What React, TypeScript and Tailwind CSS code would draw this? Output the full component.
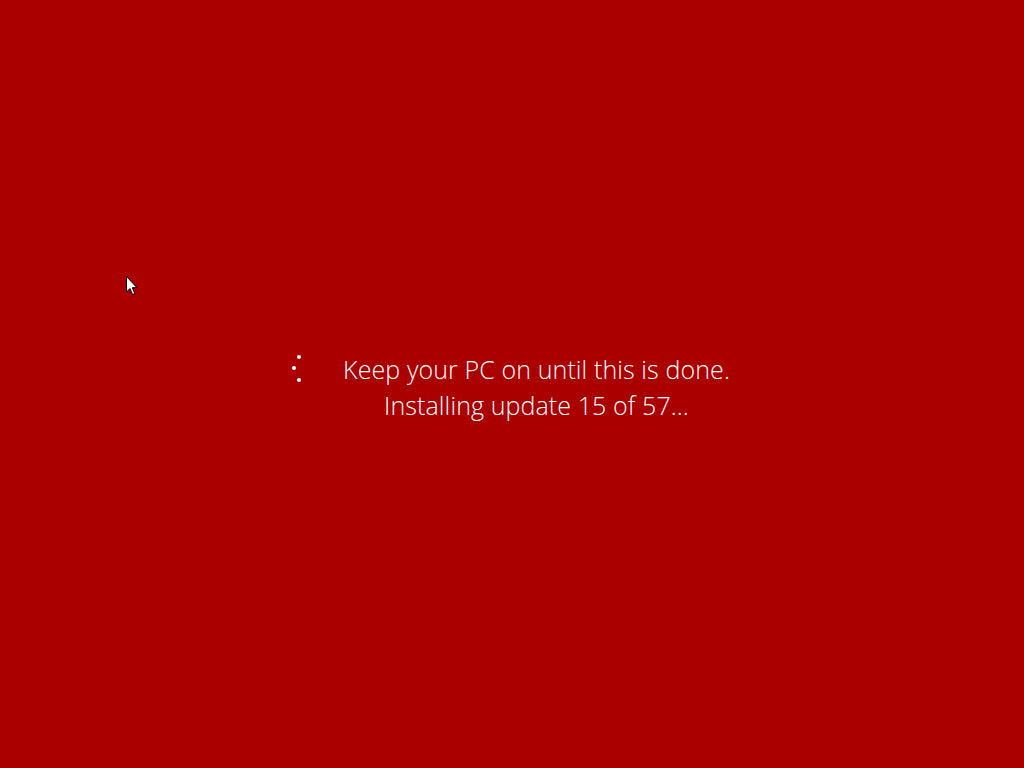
import React from "react";

export default function App() {
  return (
    <div className="relative w-[1024px] h-[768px] bg-[#ab0000] overflow-hidden" style={{ fontFamily: "'Open Sans', 'Noto Sans', sans-serif" }}>
      <div className="absolute left-[126px] top-[276px]">
        <svg width="13" height="20" viewBox="0 0 13 20">
          <path d="M0.5 0.5 L0.5 16 L4 12.5 L6.5 18.5 L8.8 17.5 L6.3 11.7 L11 11.7 Z" fill="#ffffff" stroke="#000000" strokeWidth="1" />
        </svg>
      </div>
      <div className="flex h-full items-center justify-center pt-[6px] pr-[3px]">
        <div className="flex items-start gap-[42px]">
          <div className="relative w-[10px] h-[30px] mt-[4px]">
            <span className="absolute left-[6px] top-0 w-[4px] h-[4px] rounded-full bg-white" />
            <span className="absolute left-[1px] top-[11px] w-[4px] h-[4px] rounded-full bg-white" />
            <span className="absolute left-[6px] top-[23px] w-[4px] h-[4px] rounded-full bg-white" />
          </div>
          <div className="flex flex-col items-center text-white font-light text-[25px] leading-[36px] tracking-[0.1px]">
            <div>Keep your PC on until this is done.</div>
            <div>Installing update 15 of 57...</div>
          </div>
        </div>
      </div>
    </div>
  );
}
